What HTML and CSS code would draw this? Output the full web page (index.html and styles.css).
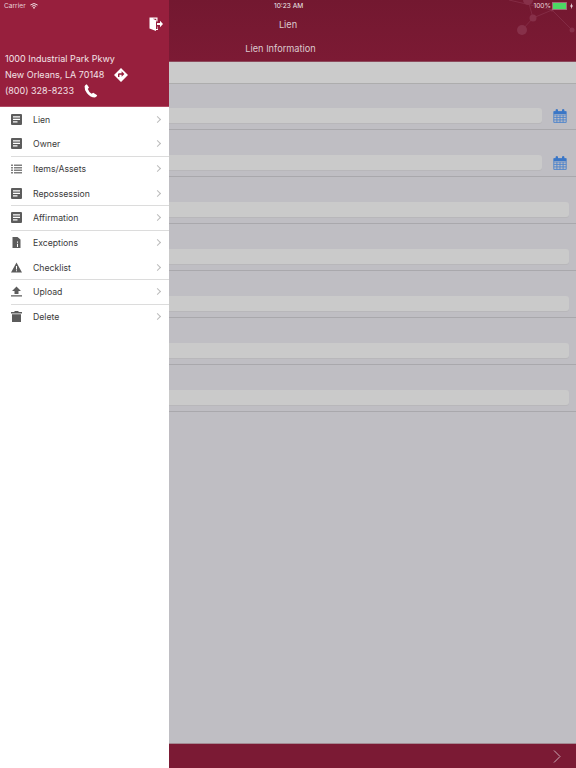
FILE: index.html
```html
<!DOCTYPE html>
<html lang="en">

<head>
    <meta charset="utf-8">
    <meta name="viewport" content="width=device-width, initial-scale=1.0">
    <title>Lien</title>
    <link rel="stylesheet" href="styles.css">
</head>

<body>
    <div class="app">

        <!--Side menu-->
        <aside class="drawer">
            <div class="drawer-head">
                <div class="logout-row">
                    <svg class="logout" width="14" height="14" viewBox="0 0 14 14">
                        <path fill="#fff" d="M0.5 0.5H8.5V4.5H7.3V1.8H3.8L7 3.2V12H8.5V9.5H9V13H7V14L0.5 11.5Z"/>
                        <path fill="#fff" d="M8 6H11V3.8L14 7L11 10.2V8H8Z"/>
                    </svg>
                </div>
                <p class="addr">1000 Industrial Park Pkwy</p>
                <p class="addr">New Orleans, LA 70148
                    <svg class="addr-icon" width="14" height="14" viewBox="0 0 14 14">
                        <path fill="#fff" fill-rule="evenodd" d="M7 0L14 7L7 14L0 7ZM7.6 3.2V5.2H5.2Q4 5.2 4 6.5V9H5.4V6.7H7.6V8.7L10.4 6Z"/>
                    </svg>
                </p>
                <p class="addr">(800) 328-8233
                    <svg class="addr-icon phone" width="14" height="14" viewBox="0 0 14 14">
                        <path fill="#fff" d="M2.8 0.3L5 3.6L3.8 5.1Q4.8 8 7.6 9.8L9.2 8.7L13.2 11.2Q12.6 13.2 10.8 13.6Q6.4 13.4 3 9.2Q0.2 5.4 0.6 2.2Q1.2 0.6 2.8 0.3Z"/>
                    </svg>
                </p>
            </div>

            <ul class="menu">
                <li class="menu-item">
                    <svg width="11" height="11" viewBox="0 0 11 11"><path fill="#5c5c5c" fill-rule="evenodd" d="M1 0H10Q11 0 11 1V10Q11 11 10 11H1Q0 11 0 10V1Q0 0 1 0ZM2 2.2V3.5H9V2.2ZM2 4.8V6H9V4.8ZM2 7.3V8.6H6.5V7.3Z"/></svg>
                    <span>Lien</span><i class="chev"></i>
                </li>
                <li class="menu-item line">
                    <svg width="11" height="11" viewBox="0 0 11 11"><path fill="#5c5c5c" fill-rule="evenodd" d="M1 0H10Q11 0 11 1V10Q11 11 10 11H1Q0 11 0 10V1Q0 0 1 0ZM2 2.2V3.5H9V2.2ZM2 4.8V6H9V4.8ZM2 7.3V8.6H6.5V7.3Z"/></svg>
                    <span>Owner</span><i class="chev"></i>
                </li>
                <li class="menu-item">
                    <svg width="11" height="11" viewBox="0 0 11 11"><path fill="#808080" d="M0 1.5H2V3H0ZM3 1.5H11V3H3ZM0 4H2V5.5H0ZM3 4H11V5.5H3ZM0 6.5H2V8H0ZM3 6.5H11V8H3ZM0 9H2V10.5H0ZM3 9H11V10.5H3Z"/></svg>
                    <span>Items/Assets</span><i class="chev"></i>
                </li>
                <li class="menu-item line">
                    <svg width="11" height="11" viewBox="0 0 11 11"><path fill="#5c5c5c" fill-rule="evenodd" d="M1 0H10Q11 0 11 1V10Q11 11 10 11H1Q0 11 0 10V1Q0 0 1 0ZM2 2.2V3.5H9V2.2ZM2 4.8V6H9V4.8ZM2 7.3V8.6H6.5V7.3Z"/></svg>
                    <span>Repossession</span><i class="chev"></i>
                </li>
                <li class="menu-item line">
                    <svg width="11" height="11" viewBox="0 0 11 11"><path fill="#5c5c5c" fill-rule="evenodd" d="M1 0H10Q11 0 11 1V10Q11 11 10 11H1Q0 11 0 10V1Q0 0 1 0ZM2 2.2V3.5H9V2.2ZM2 4.8V6H9V4.8ZM2 7.3V8.6H6.5V7.3Z"/></svg>
                    <span>Affirmation</span><i class="chev"></i>
                </li>
                <li class="menu-item">
                    <svg width="11" height="11" viewBox="0 0 11 11"><path fill="#5c5c5c" fill-rule="evenodd" d="M1.5 0H6.5L9.5 2.5V11H1.5ZM6 4.5V5.8H7V4.5ZM6 6.8V10H7V6.8Z"/></svg>
                    <span>Exceptions</span><i class="chev"></i>
                </li>
                <li class="menu-item line">
                    <svg width="11" height="11" viewBox="0 0 11 11"><path fill="#5c5c5c" fill-rule="evenodd" d="M5.5 0.5L11 10.5H0ZM5 4V7.5H6V4ZM5 8.2V9.3H6V8.2Z"/></svg>
                    <span>Checklist</span><i class="chev"></i>
                </li>
                <li class="menu-item line">
                    <svg width="11" height="11" viewBox="0 0 11 11"><path fill="#5c5c5c" d="M5.5 0.5L10 5H7.5V8H3.5V5H1ZM0 9.2H11V10.6H0Z"/></svg>
                    <span>Upload</span><i class="chev"></i>
                </li>
                <li class="menu-item">
                    <svg width="11" height="11" viewBox="0 0 11 11"><path fill="#5c5c5c" d="M3.5 0H7.5V1H11V2.5H0V1H3.5ZM1 3.2H10V11H1Z"/></svg>
                    <span>Delete</span><i class="chev"></i>
                </li>
            </ul>
        </aside>

        <!--Form behind the menu, dimmed-->
        <main class="content">
            <header class="topbar">
                <h1>Lien</h1>
                <h2>Lien Information</h2>
                <svg class="dots" width="70" height="40" viewBox="0 0 70 40">
                    <path fill="none" stroke="#873049" stroke-width=".8" d="M16 30L27 18L46 10L66 30M27 18L22 0M46 10L3 0"/>
                    <g fill="#873049">
                        <circle cx="16" cy="30" r="5"/>
                        <circle cx="27" cy="18" r="3.5"/>
                        <circle cx="22" cy="0" r="5"/>
                        <circle cx="46" cy="10" r="1.5"/>
                        <circle cx="66" cy="30" r="2.5"/>
                    </g>
                </svg>
            </header>
            <div class="band"></div>
            <section class="form">
                <div class="row">
                    <div class="field"></div>
                    <svg class="cal" width="14" height="14" viewBox="0 0 14 14">
                        <path fill="none" stroke="#4a82cc" stroke-width=".9" d="M.8 2.5H13.2V13.4H.8ZM.8 6H13.2M.8 8.4H13.2M.8 10.9H13.2M3.9 6V13.4M7 6V13.4M10.1 6V13.4"/>
                        <path fill="#3a76c6" d="M.8 2.5H13.2V5H.8ZM2.6 .8Q3.9 -.6 5 .8V3H2.6ZM9 .8Q10.2 -.6 11.4 .8V3H9Z"/>
                    </svg>
                </div>
                <div class="row">
                    <div class="field"></div>
                    <svg class="cal" width="14" height="14" viewBox="0 0 14 14">
                        <path fill="none" stroke="#4a82cc" stroke-width=".9" d="M.8 2.5H13.2V13.4H.8ZM.8 6H13.2M.8 8.4H13.2M.8 10.9H13.2M3.9 6V13.4M7 6V13.4M10.1 6V13.4"/>
                        <path fill="#3a76c6" d="M.8 2.5H13.2V5H.8ZM2.6 .8Q3.9 -.6 5 .8V3H2.6ZM9 .8Q10.2 -.6 11.4 .8V3H9Z"/>
                    </svg>
                </div>
                <div class="row"><div class="field"></div></div>
                <div class="row"><div class="field"></div></div>
                <div class="row"><div class="field"></div></div>
                <div class="row"><div class="field"></div></div>
                <div class="row"><div class="field"></div></div>
            </section>
            <footer class="bottombar">
                <svg width="8" height="13" viewBox="0 0 8 13"><path fill="none" stroke="#c9aab4" stroke-width="1" d="M1 .5L7 6.5L1 12.5"/></svg>
            </footer>
        </main>
    </div>

    <!--Status bar-->
    <div class="status">
        <span class="carrier">Carrier
            <svg width="8" height="6" viewBox="0 0 8 6"><path fill="none" stroke="#f0dde2" d="M.4 2Q4 -1 7.6 2M1.8 3.4Q4 1.6 6.2 3.4"/><path fill="#f0dde2" d="M4 6L2.8 4.5Q4 3.6 5.2 4.5Z"/></svg>
        </span>
        <span class="time">10:23 AM</span>
        <span class="battery">100%
            <i class="batt"></i>
            <svg width="3" height="6" viewBox="0 0 3 6"><path fill="#f0dde2" d="M2 0L0 3.4H1.2L1 6L3 2.6H1.8Z"/></svg>
        </span>
    </div>
</body>

</html>
```

FILE: styles.css
```css
* {
    box-sizing: border-box;
}

body {
    margin: 0;
    font-family: "Inter", "Liberation Sans", sans-serif;
    background-color: #bfbec3;
    overflow: hidden;
}

.app {
    display: flex;
    height: 768px;
}

/* SIDE MENU */

.drawer {
    width: 169px;
    flex-shrink: 0;
    background-color: #fff;
}

.drawer-head {
    height: 107px;
    padding: 17px 6px 0 5px;
    background-color: #971f3d;
    border-bottom: 1px solid #b04a63;
}

.logout-row {
    height: 20px;
    margin-bottom: 13px;
    display: flex;
    justify-content: flex-end;
    align-items: flex-start;
}

.addr {
    margin: 0;
    height: 16px;
    display: flex;
    align-items: center;
    gap: 10px;
    font-size: 9px;
    color: #f3e3e7;
}

.addr-icon {
    margin-top: 2px;
}

.menu {
    list-style: none;
    margin: 0;
    padding: 0;
}

.menu-item {
    position: relative;
    height: 24.65px;
    padding-left: 11px;
    display: flex;
    align-items: center;
    font-size: 8.7px;
    color: #3a3a3a;
}

.menu-item span {
    margin: 1px 0 0 11px;
}

.menu-item.line::after {
    content: "";
    position: absolute;
    left: 11px;
    right: 0;
    bottom: -.6px;
    height: 1px;
    background-color: #dcdcdc;
}

.chev {
    width: 5px;
    height: 5px;
    margin-left: auto;
    margin-right: 9px;
    border-top: 1px solid #bbb;
    border-right: 1px solid #bbb;
    transform: rotate(45deg);
}

/* FORM */

.content {
    flex: 1;
    display: flex;
    flex-direction: column;
}

.topbar {
    position: relative;
    height: 62px;
    padding-top: 19px;
    background-image: linear-gradient(#731830, #7c1a34);
    border-bottom: 1px solid #8d4a5c;
    text-align: center;
    color: #dcc9ce;
    overflow: hidden;
}

.topbar h1 {
    margin: 0 0 12px 0;
    width: 238px;
    font-size: 9.2px;
    font-weight: 400;
    line-height: 12px;
}

.topbar h2 {
    margin: 0;
    width: 223px;
    font-size: 9.2px;
    font-weight: 400;
    line-height: 12px;
}

.dots {
    position: absolute;
    top: 0;
    right: 0;
}

.band {
    height: 22px;
    background-color: #cbcbcb;
    border-bottom: 1px solid #adadad;
}

.form {
    flex: 1;
}

.row {
    height: 47px;
    padding: 0 7px 4px 0;
    border-bottom: 1px solid #a9a8ac;
    display: flex;
    align-items: flex-end;
    gap: 11px;
}

.row:first-child {
    height: 46px;
}

.field {
    flex: 1;
    height: 15px;
    margin-bottom: 2px;
    background-color: #cacaca;
    border-radius: 0 3px 3px 0;
    box-shadow: 0 1px 0 #b8b7ba;
}

.cal {
    margin: 0 2px 2px 0;
}

.bottombar {
    height: 25px;
    padding-right: 15px;
    background-color: #7b1a34;
    border-top: 1px solid #a38a92;
    display: flex;
    justify-content: flex-end;
    align-items: center;
}

/* STATUS BAR */

.status {
    position: absolute;
    top: 0;
    left: 0;
    width: 576px;
    height: 12px;
    padding: 0 3px 0 4px;
    display: flex;
    justify-content: space-between;
    align-items: center;
    font-size: 6.6px;
    color: #e9d3d9;
}

.status span {
    display: flex;
    align-items: center;
    gap: 4px;
}

.time {
    position: absolute;
    left: 274px;
    color: #eee;
}

.status .battery {
    gap: 2px;
}

.batt {
    width: 13px;
    height: 6px;
    background-color: #4cd964;
    outline: 1px solid #a06a78;
    display: block;
    margin-right: 2px;
}
```
